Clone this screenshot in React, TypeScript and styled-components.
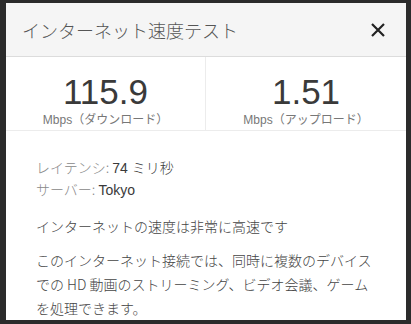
import React from "react";
import styled, { createGlobalStyle } from "styled-components";

const Global = createGlobalStyle`
  html, body { margin: 0; padding: 0; background: #2b2b2b; }
  body { font-family: "Liberation Sans", "Noto Sans CJK JP", sans-serif; }
`;

const Frame = styled.div`
  width: 411px;
  height: 324px;
  box-sizing: border-box;
  padding: 3px 5px 4px 6px;
  background: #2b2b2b;
`;

const Dialog = styled.div`
  height: 100%;
  background: #fff;
  display: flex;
  flex-direction: column;
  overflow: hidden;
`;

const Header = styled.div`
  height: 57px;
  box-sizing: border-box;
  background: #f5f5f5;
  border-bottom: 1px solid #dcdcdc;
  display: flex;
  align-items: center;
  justify-content: space-between;
  padding: 0 20px 0 16px;
`;

const Title = styled.div`
  font-family: "Noto Sans CJK JP", sans-serif;
  font-weight: 300;
  font-size: 18px;
  color: #555;
  padding-top: 2px;
`;

const Close = styled.svg`
  width: 16px;
  height: 16px;
  margin-top: 2px;
`;

const Stats = styled.div`
  display: grid;
  grid-template-columns: 200px 1fr;
  height: 79px;
  box-sizing: border-box;
  border-bottom: 1px solid #ececec;
`;

const Stat = styled.div<{ $divider?: boolean }>`
  display: flex;
  flex-direction: column;
  align-items: center;
  padding-top: 16px;
  border-right: ${(p) => (p.$divider ? "1px solid #ececec" : "none")};
`;

const Value = styled.div`
  font-family: "Liberation Sans", Arial, sans-serif;
  font-size: 35px;
  line-height: 38px;
  color: #3a3a3a;
`;

const Unit = styled.div`
  font-family: "Liberation Sans", "Noto Sans CJK JP", sans-serif;
  font-size: 12px;
  line-height: 16px;
  color: #777;
  margin-top: 1px;
`;

const Body = styled.div`
  width: 342px;
  padding: 26px 0 0 30px;
  font-family: "Noto Sans CJK JP", sans-serif;
  font-weight: 300;
`;

const Meta = styled.div`
  font-size: 14px;
  line-height: 21px;
  color: #888;
`;

const MetaValue = styled.span`
  color: #3a3a3a;
  font-family: "Liberation Sans", "Noto Sans CJK JP", sans-serif;
  font-weight: 300;
`;

const Para = styled.p<{ $gap: number }>`
  margin: ${(p) => p.$gap}px 0 0;
  font-size: 14px;
  line-height: 24px;
  color: #444;
`;

export default function App() {
  return (
    <>
      <Global />
      <Frame>
        <Dialog>
          <Header>
            <Title>インターネット速度テスト</Title>
            <Close viewBox="0 0 16 16">
              <path d="M2 2 L14 14 M14 2 L2 14" stroke="#222" strokeWidth="2.2" fill="none" />
            </Close>
          </Header>
          <Stats>
            <Stat $divider>
              <Value>115.9</Value>
              <Unit>Mbps（ダウンロード）</Unit>
            </Stat>
            <Stat>
              <Value>1.51</Value>
              <Unit>Mbps（アップロード）</Unit>
            </Stat>
          </Stats>
          <Body>
            <Meta>
              レイテンシ: <MetaValue>74 ミリ秒</MetaValue>
            </Meta>
            <Meta>
              サーバー: <MetaValue>Tokyo</MetaValue>
            </Meta>
            <Para $gap={13}>インターネットの速度は非常に高速です</Para>
            <Para $gap={10}>
              このインターネット接続では、同時に複数のデバイスでの HD 動画のストリーミング、ビデオ会議、ゲームを処理できます。
            </Para>
          </Body>
        </Dialog>
      </Frame>
    </>
  );
}
